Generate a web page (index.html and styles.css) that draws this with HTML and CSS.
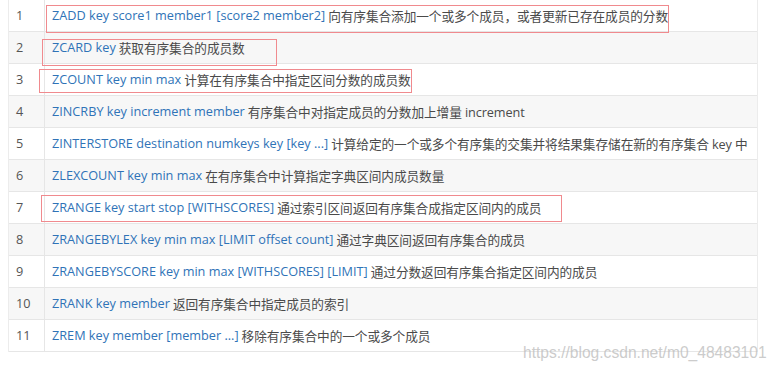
FILE: index.html
```html
<!DOCTYPE html>
<html lang="zh-CN">
<head>
<meta charset="utf-8">
<link rel="stylesheet" href="styles.css">
</head>
<body>
<div class="page">
  <div class="table">
    <div class="row"><div class="num">1</div><div class="cell"><span class="cmd">ZADD key score1 member1 [score2 member2]</span> 向有序集合添加一个或多个成员，或者更新已存在成员的分数</div></div>
    <div class="row alt"><div class="num">2</div><div class="cell"><span class="cmd">ZCARD key</span> 获取有序集合的成员数</div></div>
    <div class="row"><div class="num">3</div><div class="cell"><span class="cmd">ZCOUNT key min max</span> 计算在有序集合中指定区间分数的成员数</div></div>
    <div class="row alt"><div class="num">4</div><div class="cell"><span class="cmd">ZINCRBY key increment member</span> 有序集合中对指定成员的分数加上增量 increment</div></div>
    <div class="row"><div class="num">5</div><div class="cell"><span class="cmd">ZINTERSTORE destination numkeys key [key ...]</span> 计算给定的一个或多个有序集的交集并将结果集存储在新的有序集合 key 中</div></div>
    <div class="row alt"><div class="num">6</div><div class="cell"><span class="cmd">ZLEXCOUNT key min max</span> 在有序集合中计算指定字典区间内成员数量</div></div>
    <div class="row"><div class="num">7</div><div class="cell"><span class="cmd">ZRANGE key start stop [WITHSCORES]</span> 通过索引区间返回有序集合成指定区间内的成员</div></div>
    <div class="row alt"><div class="num">8</div><div class="cell"><span class="cmd">ZRANGEBYLEX key min max [LIMIT offset count]</span> 通过字典区间返回有序集合的成员</div></div>
    <div class="row"><div class="num">9</div><div class="cell"><span class="cmd">ZRANGEBYSCORE key min max [WITHSCORES] [LIMIT]</span> 通过分数返回有序集合指定区间内的成员</div></div>
    <div class="row alt"><div class="num">10</div><div class="cell"><span class="cmd">ZRANK key member</span> 返回有序集合中指定成员的索引</div></div>
    <div class="row"><div class="num">11</div><div class="cell"><span class="cmd">ZREM key member [member ...]</span> 移除有序集合中的一个或多个成员</div></div>
  </div>
  <div class="mark mark1"></div>
  <div class="mark mark2"></div>
  <div class="mark mark3"></div>
  <div class="mark mark7"></div>
  <div class="watermark">https://blog.csdn.net/m0_48483101</div>
</div>
</body>
</html>
```
FILE: styles.css
```css
html, body {
  margin: 0;
  padding: 0;
  background: #ffffff;
}
.page {
  position: relative;
  width: 777px;
  height: 372px;
  overflow: hidden;
  font-family: "Open Sans", "Noto Sans CJK SC", sans-serif;
  font-size: 12.7px;
  color: #4a4a4a;
}
.table {
  margin-left: 8px;
  width: 750px;
  border-left: 1px solid #ececec;
  border-right: 1px solid #ececec;
  box-sizing: border-box;
}
.row {
  display: flex;
  height: 32px;
  box-sizing: border-box;
  border-bottom: 1px solid #e6e6e6;
  background: #ffffff;
}
.row.alt {
  background: #f7f7f7;
}
.num {
  width: 36px;
  flex: none;
  box-sizing: border-box;
  padding-left: 7px;
  padding-bottom: 1px;
  border-right: 1px solid #e6e6e6;
  display: flex;
  align-items: center;
  color: #555555;
}
.cell {
  flex: 1;
  padding-left: 7px;
  padding-bottom: 1px;
  display: flex;
  align-items: center;
  white-space: nowrap;
  overflow: hidden;
  gap: 3px;
  letter-spacing: -0.1px;
}
.cmd {
  color: #2f73b7;
  letter-spacing: 0;
}
.mark {
  position: absolute;
  border: 1.5px solid #f08a8e;
  box-sizing: border-box;
}
.mark1 { left: 46px; top: 5px; width: 623px; height: 28px; }
.mark2 { left: 42px; top: 39px; width: 235px; height: 27px; }
.mark3 { left: 39px; top: 69px; width: 373px; height: 24px; }
.mark7 { left: 41px; top: 195px; width: 521px; height: 27px; }
.watermark {
  position: absolute;
  left: 523px;
  top: 344px;
  font-family: "Liberation Sans", sans-serif;
  font-size: 15.6px;
  color: rgba(190, 190, 190, 0.8);
}
```
